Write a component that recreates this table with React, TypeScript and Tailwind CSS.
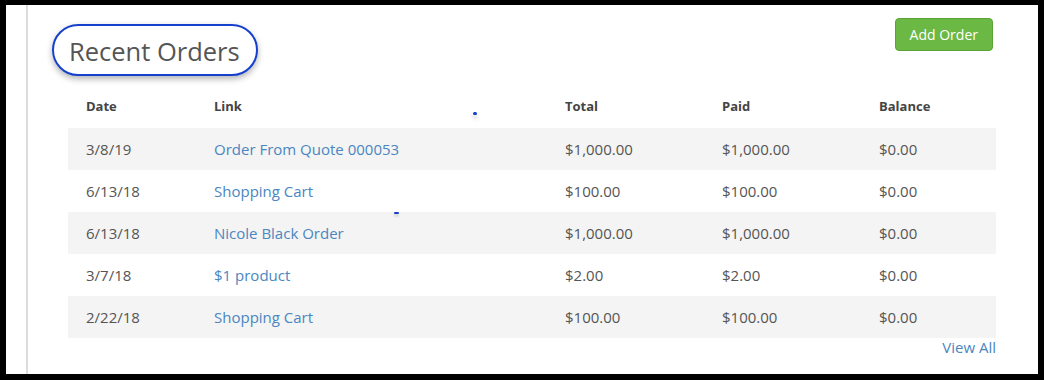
import * as React from "react";

const orders = [
  { date: "3/8/19", link: "Order From Quote 000053", total: "$1,000.00", paid: "$1,000.00", balance: "$0.00" },
  { date: "6/13/18", link: "Shopping Cart", total: "$100.00", paid: "$100.00", balance: "$0.00" },
  { date: "6/13/18", link: "Nicole Black Order", total: "$1,000.00", paid: "$1,000.00", balance: "$0.00" },
  { date: "3/7/18", link: "$1 product", total: "$2.00", paid: "$2.00", balance: "$0.00" },
  { date: "2/22/18", link: "Shopping Cart", total: "$100.00", paid: "$100.00", balance: "$0.00" },
];

const cols = "grid grid-cols-[128px_351px_157px_157px_135px]";

export default function App() {
  return (
    <div className="w-[1044px] h-[380px] bg-black pt-[5px] pl-[6px] font-['Open_Sans',sans-serif]">
      <div className="relative w-[1032px] h-[369px] bg-white flex">
        <div className="w-[22px] shrink-0 border-r-2 border-[#dcdcdc]" />
        <div className="flex-1 pl-[40px] flex flex-col">
          <div className="h-[81px] flex justify-between w-[928px]">
            <div className="relative mt-[30px] ml-[1px]">
              <h2 className="text-[25.5px] leading-[32px] text-[#555] font-normal">Recent Orders</h2>
              <div className="absolute left-[-17px] top-[-11px] w-[206px] h-[52px] rounded-full border-2 border-[#1540cc] shadow-[0_3px_6px_rgba(0,0,0,0.3)]" />
            </div>
            <button className="mt-[13px] mr-[3px] h-[33px] px-[14px] rounded-[4px] bg-[#6cb845] border border-[#5aa336] text-white text-[14px]">
              Add Order
            </button>
          </div>
          <div className="w-[928px]">
            <div className={`${cols} h-[42px] items-center text-[13px] font-bold text-[#444]`}>
              <div className="pl-[18px]">Date</div>
              <div className="pl-[18px]">Link</div>
              <div className="pl-[18px]">Total</div>
              <div className="pl-[18px]">Paid</div>
              <div className="pl-[18px]">Balance</div>
            </div>
            {orders.map((o, i) => (
              <div
                key={i}
                className={`${cols} h-[42px] items-center text-[15px] text-[#555] ${i % 2 === 0 ? "bg-[#f4f4f4]" : "bg-white"}`}
              >
                <div className="pl-[18px]">{o.date}</div>
                <div className="pl-[18px] text-[#4a86c0]">{o.link}</div>
                <div className="pl-[18px]">{o.total}</div>
                <div className="pl-[18px]">{o.paid}</div>
                <div className="pl-[18px]">{o.balance}</div>
              </div>
            ))}
            <div className="flex justify-end">
              <a className="text-[15px] leading-[20px] text-[#4a86c0] -mt-[1px]">View All</a>
            </div>
          </div>
        </div>
        <div className="absolute left-[467px] top-[107px] w-[4px] h-[3px] rounded-full bg-[#1540cc] shadow-[0_3px_4px_rgba(0,0,0,0.3)]" />
        <div className="absolute left-[388px] top-[207px] w-[5px] h-[2px] rounded-full bg-[#1540cc] shadow-[0_2px_3px_rgba(0,0,0,0.2)]" />
      </div>
    </div>
  );
}
